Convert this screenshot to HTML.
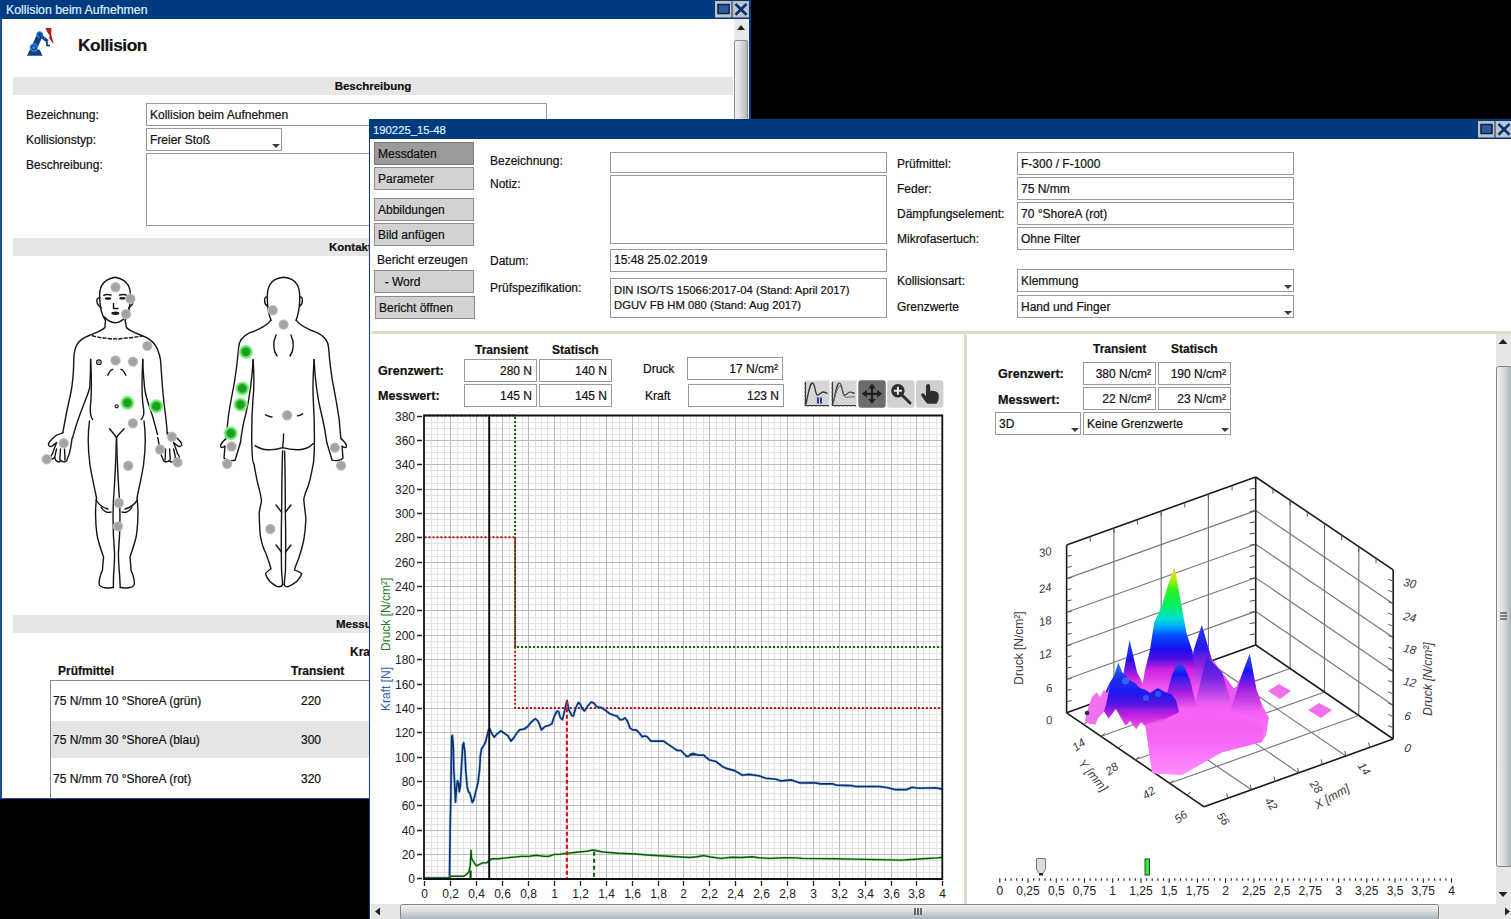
<!DOCTYPE html>
<html><head><meta charset="utf-8">
<style>
*{box-sizing:border-box}
html,body{margin:0;padding:0}
body{width:1511px;height:919px;background:#000;position:relative;overflow:hidden;font-family:"Liberation Sans",sans-serif;font-size:12px;color:#111;-webkit-text-stroke:0.2px currentColor}
.a{position:absolute}
.tb{position:absolute;background:#003a80;color:#dff2ff;font-size:12px;line-height:19px;white-space:nowrap}
.win{position:absolute;background:#fff;overflow:hidden}
.sec{position:absolute;background:#e6e6e6;height:18px;font-weight:bold;font-size:11.5px;line-height:18px;text-align:center}
.lbl{position:absolute;white-space:nowrap;line-height:14px}
.box{position:absolute;border:1px solid #9a9a9a;background:#fff;white-space:nowrap;line-height:14px;padding:4px 0 0 3px}
.r{text-align:right;padding:4px 4px 0 0}
.btn{position:absolute;background:#d2d2d2;border:1px solid #8c8c8c;white-space:nowrap;padding:4px 0 0 3px;line-height:14px}
.dd:after{content:"";position:absolute;right:1px;bottom:2px;border-left:4px solid transparent;border-right:4px solid transparent;border-top:4px solid #3a3a3a}
.b{font-weight:bold}
svg{position:absolute;left:0;top:0}
</style></head><body>

<!-- WINDOW 1 -->
<div class="win" style="left:0;top:0;width:751px;height:799px">
<div class="a" style="left:13px;top:77px;width:720px;height:18px;background:#e6e6e6"></div>
<div class="sec" style="left:13px;top:77px;width:720px;background:none">Beschreibung</div>
<div class="lbl" style="left:26px;top:108px">Bezeichnung:</div>
<div class="lbl" style="left:26px;top:133px">Kollisionstyp:</div>
<div class="lbl" style="left:26px;top:158px">Beschreibung:</div>
<div class="box" style="left:146px;top:103px;width:401px;height:22.5px">Kollision beim Aufnehmen</div>
<div class="box dd" style="left:146px;top:128px;width:136px;height:22.5px">Freier Stoß</div>
<div class="box" style="left:146px;top:153px;width:600px;height:72.5px"></div>
<div class="a" style="left:13px;top:238px;width:720px;height:18px;background:#e6e6e6"></div><div class="lbl b" style="left:329px;top:240px;font-size:11.5px">Kontaktbereiche</div>
<div class="a" style="left:13px;top:615px;width:720px;height:18px;background:#e6e6e6"></div><div class="lbl b" style="left:336px;top:617px;font-size:11.5px">Messungen</div>
<div class="lbl b" style="left:350px;top:645px">Kraft [N]</div>
<div class="lbl b" style="left:58px;top:664px">Prüfmittel</div>
<div class="lbl b" style="left:291px;top:664px">Transient</div>
<div class="a" style="left:50px;top:680px;width:700px;height:130px;border:1px solid #8a8a8a;border-right:none;border-bottom:none"></div>
<div class="a" style="left:51px;top:721px;width:700px;height:37px;background:#e5e5e5"></div>
<div class="lbl" style="left:53px;top:694px">75 N/mm 10 °ShoreA (grün)</div>
<div class="lbl" style="left:53px;top:733px">75 N/mm 30 °ShoreA (blau)</div>
<div class="lbl" style="left:53px;top:772px">75 N/mm 70 °ShoreA (rot)</div>
<div class="lbl" style="left:301px;top:694px">220</div>
<div class="lbl" style="left:301px;top:733px">300</div>
<div class="lbl" style="left:301px;top:772px">320</div>
<svg width="760" height="800" style="left:0;top:0">
<g stroke="#151515" stroke-width="1.4" fill="none" stroke-linecap="round" stroke-linejoin="round"><path d="M105.5 320.3 C101 314 100 306 99.8 300 C99 290 100 280 115.1 277.2 C130 280 131 290 130.3 300 C130 306 129 314 125.2 320.3"/><path d="M99.8 298 C96 297 96 303 99 306 L101.5 308"/><path d="M130.3 298 C134 297 134 303 131 306 L128.5 308"/><path d="M104.5 317 C108 321 111 322.7 115.1 322.7 C119 322.7 122 321 125.8 317"/><path d="M105.5 320.3 L104.9 327.5 C102 331 95 333 88 336 C78 340 74 346 73.8 359.8 C73.5 372 73.5 379 71 392 C68 405 65.3 418 62.8 432.8"/><path d="M125.2 320.3 L126.4 327.5 C129 331 136 333 143 336 C153 340 158 346 160.5 359.8 C161.5 372 162 385 164 403.4 C166 418 167 428 167.3 434.5"/><path d="M62.8 432.8 C59 434 57 435 55.7 435.7 C53 438 51 440 49.8 441.5 C48.5 443 48 445 48.8 445.5 C49.5 446.8 51 446.6 51.7 446.4 C53.5 445 55.5 443.5 56.6 442.5 C55 447 53.5 450 52.7 453.3 C51.5 455 50.5 456.5 50.8 457.2 C51.5 459.5 53 459.6 54.7 457.2 C55 459 56 461.5 58.6 462.1 C60 462 60.5 461 60.6 460.1 C61.5 461.5 63.5 462 65.5 461.5 C67 461 67.3 459.5 67.4 458.2 C68.5 456 69 455 69.4 453.3 C70.5 449 71 446 71.3 443.5 C71.8 440 72.1 437.5 72.6 437.7"/><path d="M56.5 449 L54.7 457.2 M60.5 449 L59.8 459.5 M64.5 449 L65 460"/><path d="M72.6 437.7 C75 428 78 419 84.1 403.4 C87 396 89.5 390 89.8 387.1 C90.5 375 90.6 368 90.6 359.4"/><path d="M 167.3 432.8 C 171.1 434.0 173.1 435.0 174.4 435.7 C 177.1 438.0 179.1 440.0 180.3 441.5 C 181.6 443.0 182.1 445.0 181.3 445.5 C 180.6 446.8 179.1 446.6 178.4 446.4 C 176.6 445.0 174.6 443.5 173.5 442.5 C 175.1 447.0 176.6 450.0 177.4 453.3 C 178.6 455.0 179.6 456.5 179.3 457.2 C 178.6 459.5 177.1 459.6 175.4 457.2 C 175.1 459.0 174.1 461.5 171.5 462.1 C 170.1 462.0 169.6 461.0 169.5 460.1 C 168.6 461.5 166.6 462.0 164.6 461.5 C 163.1 461.0 162.8 459.5 162.7 458.2 C 161.6 456.0 161.1 455.0 160.7 453.3 C 159.6 449.0 159.1 446.0 158.8 443.5 C 158.3 440.0 158.0 437.5 157.5 437.7"/><path d="M 173.6 449.0 L 175.4 457.2 M 169.6 449.0 L 170.3 459.5 M 165.6 449.0 L 165.1 460.0"/><path d="M157.5 434.5 C155 425 153 417 151 411.6 C147 400 145 393 144.5 387.1 C143.5 375 142.8 368 142.8 359.4"/><path d="M90.6 359.4 C91.4 375 91.6 395 90.5 405 C89.8 411.6 90 416 92.6 419.5"/><path d="M142.8 359.4 C142 375 141.8 395 143 405 C144.5 413.2 144 416 141.2 419.5"/><path d="M89.5 421 C87.5 435 88 450 90 465 C92 478 95 490 96.5 498 C95 510 95 520 97 535 C99 545 102 552 103.6 557.1 C103 563 102.5 568 102.5 570 C100 576 98.5 582 99.5 585 C101 588 108 588.5 113.4 587.5"/><path d="M144 421 C146 435 145.5 450 143.5 465 C141.5 478 138.5 490 137 498 C138.5 510 138.5 520 136.5 535 C134.5 545 131.5 552 130 557.1 C130.5 563 131 568 131 570 C133.5 576 135 582 134 585 C132.5 588 125.5 588.5 120.2 587.5"/><path d="M109.5 428.8 C112 432 115 435 116.4 437.6 C118 435 121 432 124.2 428.8"/><path d="M116.4 437.6 C116 455 115 480 113.5 500 C112.5 520 113.5 540 114.5 552 C115 562 113 575 113.4 587.5"/><path d="M116.6 437.6 C117 455 118 480 119.5 500 C120.5 520 119.5 540 118.5 552 C118 562 120 575 120.2 587.5"/><path d="M96 500 C99 505 104 508 108 509"/><path d="M137.5 500 C134 505 129 508 125 509"/><path d="M101 507 C104 512 108 513 111 512"/><path d="M132 507 C129 512 125 513 122 512"/><path d="M107.9 375.3 C109 372 110.5 370 112.7 369.3"/><path d="M121 369.3 C123 370 124.5 372 125.8 375.3"/><path d="M103.8 295.3 C105.5 294.3 108 294.3 111 295"/><path d="M119.5 295 C122.5 294.3 125 294.3 126.5 295.3"/><path d="M113.5 303.5 V308.5 H118"/></g>
<path d="M92.3 335.8 C97 337 101 338 104 338 C108 338 112 340 115.1 338.5 C118 340 122 338 126 338 C130 338 136 337 142.6 335.8" stroke="#151515" stroke-width="1.4" fill="none" stroke-linecap="round" stroke-linejoin="round" stroke-dasharray="3.2 2.2"/>
<circle cx="98.9" cy="362.2" r="2.3" fill="none" stroke="#151515" stroke-width="1.2"/><circle cx="98.9" cy="362.2" r="0.8" fill="#151515"/>
<ellipse cx="108" cy="298.5" rx="3.2" ry="1.3" fill="#151515"/><ellipse cx="122.5" cy="298.3" rx="3.2" ry="1.3" fill="#151515"/><ellipse cx="115.3" cy="313.2" rx="4" ry="1.7" fill="#151515"/>
<circle cx="116.7" cy="406.3" r="1.6" fill="none" stroke="#151515" stroke-width="1.1"/>
<g stroke="#151515" stroke-width="1.4" fill="none" stroke-linecap="round" stroke-linejoin="round"><path d="M271 320.2 C268.5 314 267.5 306 267.4 300 C266.5 288 270 278 283.6 277.2 C297 278 300.5 288 299.7 300 C299.5 306 298.5 314 296.1 320.2"/><path d="M267.4 297 C264 296 263.5 303 267 306"/><path d="M299.7 297 C303 296 303.5 303 300 306"/><path d="M271 320.2 C266 327 258 330 249.5 332.8 C243 336 239 341 238.7 347 C237 365 235 380 233.3 388.4 C231 400 229 410 227.9 420.7 C227 430 226.5 435 226.1 438.6"/><path d="M296.1 320.2 C301 327 309 330 317.6 332.8 C324 336 328 341 328.5 347 C330 365 332 380 333.9 388.4 C336 400 338 410 339.3 420.7 C340 430 340.5 435 341 438.6"/><path d="M226.1 438.6 C223 441 220 444 220.8 447 C222 448 224 447 225 446 L224 458 C226 461 232 461 235.1 460.2 L240.5 442.2"/><path d="M341 438.6 C344 441 347 444 346.4 447 C345 448 343 447 342 446 L343 458 C341 461 335 461 332.1 460.2 L326.7 442.2"/><path d="M240.5 442.2 C242 430 244 420 245.9 413.5 C249 400 252 380 253.1 359.7"/><path d="M326.7 442.2 C325 430 323 420 321.3 413.5 C318 400 315 380 314.1 359.7"/><path d="M253.1 359.7 C254.5 380 253.5 395 252.9 400 C251.8 415 251.6 430 251.8 442.4 C252 455 253 463 253.9 463.6 C256 476 258 485 259.2 489.1 C261 496 261.5 500 261.4 501.8 C260 508 259 512 259.2 514.5 C259.5 525 259.8 530 260.3 535.7 C262 545 264 550 265.6 552.7 C268 559 270 565 271 569 C268 571 265.5 572.5 265.6 574 C267 579 270 583 277.3 586.6 C280 587 282 586 282.6 584.5"/><path d="M314.1 359.7 C312.7 380 313 395 313.3 400 C314.2 415 314.5 430 314.4 442.4 C314.3 455 314 460 313.3 463.6 C311 476 309 485 307 489.1 C305 494 304 497 303.8 499.7 C304.5 508 305.5 514 305.9 518.8 C305.5 528 304.8 534 303.8 540 C302 548 300.5 553 298.5 559.1 C296.5 564 295 567 294.5 570 C297 571 301 572.5 301.7 574 C300 579 297 583 287.9 586.6 C286 587 284.5 586 284.2 584.5"/><path d="M283.6 433.9 C283.5 440 283 445 282.6 447.7"/><path d="M282.6 450.9 C281.5 480 282 500 281.5 520 C281 545 281.5 560 281.5 569.7 L282.6 584.5"/><path d="M284.6 450.9 C285.5 480 285 500 285.5 520 C286 545 285.5 560 285.5 569.7 L284.2 584.5"/><path d="M276 505 L281.5 512 M291 505 L285.5 512"/><path d="M276 545 L281.5 552 M291 545 L285.5 552"/><path d="M255 445.6 C260 448.5 264 450 267.7 449.8 C274 450 279 449 282.6 447.7 C287 449 292 450 298.5 449.8 C305 449.5 310 447 313.3 443.5"/><path d="M265.6 414.8 C268 416 270 417 272 417"/><path d="M297.4 415.9 C299 415.5 301 414.8 302.7 413.8"/><path d="M276 335 C273 342 273 350 277 356"/><path d="M291 335 C294 342 294 350 290 356"/></g>
<defs><radialGradient id="gd"><stop offset="0" stop-color="#a0a0a0"/><stop offset="0.7" stop-color="#a6a6a6"/><stop offset="1" stop-color="#c8c8c8"/></radialGradient><radialGradient id="gg"><stop offset="0" stop-color="#1e9a1e"/><stop offset="0.5" stop-color="#20a020"/><stop offset="0.62" stop-color="#50d850"/><stop offset="0.85" stop-color="#90f090"/><stop offset="1" stop-color="#d0fcd0" stop-opacity="0.4"/></radialGradient></defs>
<circle cx="115.5" cy="287.3" r="5.2" fill="url(#gd)"/><circle cx="130.4" cy="298.8" r="5.2" fill="url(#gd)"/><circle cx="126.1" cy="314.1" r="5.2" fill="url(#gd)"/><circle cx="147.3" cy="345.9" r="5.2" fill="url(#gd)"/><circle cx="115.5" cy="360.4" r="5.2" fill="url(#gd)"/><circle cx="132.9" cy="361.6" r="5.2" fill="url(#gd)"/><circle cx="132.9" cy="423.2" r="5.2" fill="url(#gd)"/><circle cx="172" cy="436.8" r="5.2" fill="url(#gd)"/><circle cx="63.7" cy="443.2" r="5.2" fill="url(#gd)"/><circle cx="160.1" cy="449.5" r="5.2" fill="url(#gd)"/><circle cx="46.7" cy="459.3" r="5.2" fill="url(#gd)"/><circle cx="177.5" cy="462.3" r="5.2" fill="url(#gd)"/><circle cx="128.2" cy="465.7" r="5.2" fill="url(#gd)"/><circle cx="118.9" cy="503" r="5.2" fill="url(#gd)"/><circle cx="118" cy="526.4" r="5.2" fill="url(#gd)"/><circle cx="272.8" cy="310.2" r="5.2" fill="url(#gd)"/><circle cx="283.6" cy="324.5" r="5.2" fill="url(#gd)"/><circle cx="287.1" cy="415.3" r="5.2" fill="url(#gd)"/><circle cx="231.5" cy="446.5" r="5.2" fill="url(#gd)"/><circle cx="334.9" cy="447.6" r="5.2" fill="url(#gd)"/><circle cx="227.2" cy="463.8" r="5.2" fill="url(#gd)"/><circle cx="341" cy="465.6" r="5.2" fill="url(#gd)"/><circle cx="270.3" cy="529" r="5.2" fill="url(#gd)"/>
<circle cx="127.4" cy="402.8" r="7.5" fill="url(#gg)"/><circle cx="156.3" cy="406.2" r="7.5" fill="url(#gg)"/><circle cx="245.9" cy="351.8" r="7.5" fill="url(#gg)"/><circle cx="242.3" cy="388.4" r="7.5" fill="url(#gg)"/><circle cx="240.5" cy="404.6" r="7.5" fill="url(#gg)"/><circle cx="230.8" cy="433.3" r="7.5" fill="url(#gg)"/>
</svg>
<svg width="80" height="70" style="left:0;top:0">
<path d="M27 55.8 L30 49.5 L39.5 49.5 L42.6 55.8 Z" fill="#123f86"/>
<path d="M31 48 L37 34 L42.5 36.5 L36.5 50 Z" fill="#123f86"/>
<circle cx="33.8" cy="47.6" r="3.6" fill="#154a9a" stroke="#3c90f0" stroke-width="1.1"/>
<circle cx="33.8" cy="47.6" r="1.3" fill="#3c90f0"/>
<circle cx="39.7" cy="34.5" r="2.8" fill="#154a9a" stroke="#3c90f0" stroke-width="1.1"/>
<path d="M40 33 L48.5 40 L46.5 42.5 L38.5 36 Z" fill="#123f86"/>
<path d="M41.5 36 l1.3 1.1 M44 38.1 l1.3 1.1" stroke="#4aa0ff" stroke-width="0.9"/>
<path d="M47 41.5 V45.5 H50" stroke="#0a2a60" stroke-width="1.6" fill="none"/>
<path d="M45.3 27.8 L51.5 28.3 L51.2 34.5 L53.8 44.5 L49.3 38.5 L49.6 35.5 L47.2 32 Z" fill="#b81a1a"/>
</svg>
<div class="a b" style="left:78px;top:35px;font-size:17.3px;line-height:20px;letter-spacing:-0.45px">Kollision</div>
<!-- scrollbar -->
<div class="a" style="left:734px;top:19px;width:15px;height:778px;background:#e8e8e8"></div>
<div class="a" style="left:737px;top:25px;width:0;height:0;border-left:4px solid transparent;border-right:4px solid transparent;border-bottom:5px solid #222"></div>
<div class="a" style="left:734px;top:40px;width:14px;height:760px;border:1px solid #8f8f8f;border-radius:2px;background:linear-gradient(90deg,#f0f0f0,#e0e0e0 40%,#b8b8b8)"></div>
<div class="a" style="left:0;top:0;width:1.5px;height:799px;background:#1a4f96"></div>
<div class="a" style="left:749px;top:0;width:2px;height:799px;background:#003a80"></div>
<div class="a" style="left:0;top:797.5px;width:751px;height:1.5px;background:#1a4f96"></div>
<div class="tb" style="left:0;top:0;width:751px;height:19px;padding-left:6px;padding-top:1px;font-size:12.3px;line-height:19px">Kollision beim Aufnehmen</div>
<svg width="40" height="20" style="left:715px;top:1px">
<rect x="0.5" y="0.5" width="15.5" height="15.5" fill="#b9c6d2" stroke="#c9b8a8" stroke-width="1"/>
<rect x="3" y="3.5" width="11" height="9" fill="#2e5aa0" stroke="#0b2554" stroke-width="1.6"/>
<rect x="18" y="0.5" width="15.5" height="15.5" fill="#b9c6d2" stroke="#c9b8a8" stroke-width="1"/>
<path d="M20.5 3 L31.5 13.8 M31.5 3 L20.5 13.8" stroke="#0b3272" stroke-width="2.6"/>
</svg>
</div>

<!-- WINDOW 2 -->
<div class="win" style="left:369px;top:119px;width:1142px;height:800px;border-left:1.5px solid #0d3c84"></div>
<div class="tb" style="left:369px;top:119px;width:1142px;height:20px;padding-left:4px;padding-top:1px;line-height:20px;font-size:11.3px">190225_15-48</div>
<svg width="40" height="20" style="left:1478px;top:121px">
<rect x="0.5" y="0.5" width="15.5" height="15.5" fill="#b9c6d2" stroke="#c9b8a8" stroke-width="1"/>
<rect x="3" y="3.5" width="11" height="9" fill="#2e5aa0" stroke="#0b2554" stroke-width="1.6"/>
<rect x="18" y="0.5" width="15.5" height="15.5" fill="#b9c6d2" stroke="#c9b8a8" stroke-width="1"/>
<path d="M20.5 3 L31.5 13.8 M31.5 3 L20.5 13.8" stroke="#0b3272" stroke-width="2.6"/>
</svg>

<div class="btn" style="left:374px;top:142px;width:100px;height:23px;background:#9b9b9b;border-color:#7a7a7a">Messdaten</div>
<div class="btn" style="left:374px;top:167px;width:100px;height:23px">Parameter</div>
<div class="btn" style="left:374px;top:198px;width:100px;height:23px">Abbildungen</div>
<div class="btn" style="left:374px;top:223px;width:100px;height:23px">Bild anfügen</div>
<div class="lbl" style="left:377px;top:253px">Bericht erzeugen</div>
<div class="btn" style="left:374px;top:270px;width:100px;height:23px">&nbsp; - Word</div>
<div class="btn" style="left:375px;top:296px;width:100px;height:23px">Bericht öffnen</div>

<div class="lbl" style="left:490px;top:154px">Bezeichnung:</div>
<div class="lbl" style="left:490px;top:177px">Notiz:</div>
<div class="lbl" style="left:490px;top:254px">Datum:</div>
<div class="lbl" style="left:490px;top:281px">Prüfspezifikation:</div>
<div class="box" style="left:610px;top:152px;width:277px;height:21px"></div>
<div class="box" style="left:610px;top:175px;width:277px;height:69px"></div>
<div class="box" style="left:610px;top:249px;width:277px;height:23px;padding-top:3px">15:48 25.02.2019</div>
<div class="box" style="left:610px;top:278px;width:277px;height:40px;line-height:15px;padding-top:4px;font-size:11.3px">DIN ISO/TS 15066:2017-04 (Stand: April 2017)<br>DGUV FB HM 080 (Stand: Aug 2017)</div>

<div class="lbl" style="left:897px;top:157px">Prüfmittel:</div>
<div class="lbl" style="left:897px;top:182px">Feder:</div>
<div class="lbl" style="left:897px;top:207px">Dämpfungselement:</div>
<div class="lbl" style="left:897px;top:232px">Mikrofasertuch:</div>
<div class="lbl" style="left:897px;top:274px">Kollisionsart:</div>
<div class="lbl" style="left:897px;top:300px">Grenzwerte</div>
<div class="box" style="left:1017px;top:152px;width:277px;height:22.5px">F-300 / F-1000</div>
<div class="box" style="left:1017px;top:177px;width:277px;height:22.5px">75 N/mm</div>
<div class="box" style="left:1017px;top:202px;width:277px;height:22.5px">70 °ShoreA (rot)</div>
<div class="box" style="left:1017px;top:227px;width:277px;height:22.5px">Ohne Filter</div>
<div class="box dd" style="left:1017px;top:269px;width:277px;height:22.5px">Klemmung</div>
<div class="box dd" style="left:1017px;top:295px;width:277px;height:22.5px">Hand und Finger</div>

<div class="a" style="left:371px;top:331px;width:1140px;height:3px;background:#dcdccb"></div>
<div class="a" style="left:964px;top:334px;width:3px;height:585px;background:#dcdccb"></div>

<svg width="1511" height="919" style="left:0;top:0">
<path d="M431.5 415.5V878.5M437.5 415.5V878.5M444.5 415.5V878.5M457.5 415.5V878.5M463.5 415.5V878.5M470.5 415.5V878.5M483.5 415.5V878.5M489.5 415.5V878.5M496.5 415.5V878.5M509.5 415.5V878.5M515.5 415.5V878.5M522.5 415.5V878.5M535.5 415.5V878.5M541.5 415.5V878.5M547.5 415.5V878.5M560.5 415.5V878.5M567.5 415.5V878.5M573.5 415.5V878.5M586.5 415.5V878.5M593.5 415.5V878.5M599.5 415.5V878.5M612.5 415.5V878.5M619.5 415.5V878.5M625.5 415.5V878.5M638.5 415.5V878.5M645.5 415.5V878.5M651.5 415.5V878.5M664.5 415.5V878.5M670.5 415.5V878.5M677.5 415.5V878.5M690.5 415.5V878.5M696.5 415.5V878.5M703.5 415.5V878.5M716.5 415.5V878.5M722.5 415.5V878.5M729.5 415.5V878.5M742.5 415.5V878.5M748.5 415.5V878.5M755.5 415.5V878.5M768.5 415.5V878.5M774.5 415.5V878.5M780.5 415.5V878.5M793.5 415.5V878.5M800.5 415.5V878.5M806.5 415.5V878.5M819.5 415.5V878.5M826.5 415.5V878.5M832.5 415.5V878.5M845.5 415.5V878.5M852.5 415.5V878.5M858.5 415.5V878.5M871.5 415.5V878.5M878.5 415.5V878.5M884.5 415.5V878.5M897.5 415.5V878.5M903.5 415.5V878.5M910.5 415.5V878.5M923.5 415.5V878.5M929.5 415.5V878.5M936.5 415.5V878.5M424.5 872.5H942.3M424.5 866.5H942.3M424.5 860.5H942.3M424.5 848.5H942.3M424.5 842.5H942.3M424.5 836.5H942.3M424.5 824.5H942.3M424.5 818.5H942.3M424.5 811.5H942.3M424.5 799.5H942.3M424.5 793.5H942.3M424.5 787.5H942.3M424.5 775.5H942.3M424.5 769.5H942.3M424.5 763.5H942.3M424.5 751.5H942.3M424.5 744.5H942.3M424.5 738.5H942.3M424.5 726.5H942.3M424.5 720.5H942.3M424.5 714.5H942.3M424.5 702.5H942.3M424.5 696.5H942.3M424.5 690.5H942.3M424.5 677.5H942.3M424.5 671.5H942.3M424.5 665.5H942.3M424.5 653.5H942.3M424.5 647.5H942.3M424.5 641.5H942.3M424.5 629.5H942.3M424.5 623.5H942.3M424.5 617.5H942.3M424.5 604.5H942.3M424.5 598.5H942.3M424.5 592.5H942.3M424.5 580.5H942.3M424.5 574.5H942.3M424.5 568.5H942.3M424.5 556.5H942.3M424.5 550.5H942.3M424.5 543.5H942.3M424.5 531.5H942.3M424.5 525.5H942.3M424.5 519.5H942.3M424.5 507.5H942.3M424.5 501.5H942.3M424.5 495.5H942.3M424.5 483.5H942.3M424.5 476.5H942.3M424.5 470.5H942.3M424.5 458.5H942.3M424.5 452.5H942.3M424.5 446.5H942.3M424.5 434.5H942.3M424.5 428.5H942.3M424.5 422.5H942.3" stroke="#e2e2e2" stroke-width="1" fill="none"/>
<path d="M450.5 415.5V878.5M476.5 415.5V878.5M502.5 415.5V878.5M528.5 415.5V878.5M554.5 415.5V878.5M580.5 415.5V878.5M606.5 415.5V878.5M632.5 415.5V878.5M658.5 415.5V878.5M683.5 415.5V878.5M709.5 415.5V878.5M735.5 415.5V878.5M761.5 415.5V878.5M787.5 415.5V878.5M813.5 415.5V878.5M839.5 415.5V878.5M865.5 415.5V878.5M891.5 415.5V878.5M916.5 415.5V878.5M424.5 854.5H942.3M424.5 830.5H942.3M424.5 805.5H942.3M424.5 781.5H942.3M424.5 757.5H942.3M424.5 732.5H942.3M424.5 708.5H942.3M424.5 684.5H942.3M424.5 659.5H942.3M424.5 635.5H942.3M424.5 610.5H942.3M424.5 586.5H942.3M424.5 562.5H942.3M424.5 537.5H942.3M424.5 513.5H942.3M424.5 489.5H942.3M424.5 464.5H942.3M424.5 440.5H942.3" stroke="#bcbcbc" stroke-width="1" fill="none"/>
<path d="M417 878.5H422M417 854.5H422M417 830.5H422M417 805.5H422M417 781.5H422M417 757.5H422M417 732.5H422M417 708.5H422M417 684.5H422M417 659.5H422M417 635.5H422M417 610.5H422M417 586.5H422M417 562.5H422M417 537.5H422M417 513.5H422M417 489.5H422M417 464.5H422M417 440.5H422M417 416.5H422M424.5 881V886M450.5 881V886M476.5 881V886M502.5 881V886M528.5 881V886M554.5 881V886M580.5 881V886M606.5 881V886M632.5 881V886M658.5 881V886M683.5 881V886M709.5 881V886M735.5 881V886M761.5 881V886M787.5 881V886M813.5 881V886M839.5 881V886M865.5 881V886M891.5 881V886M916.5 881V886M942.5 881V886" stroke="#222" stroke-width="1.3" fill="none"/>
<g font-family="Liberation Sans" font-size="12" fill="#222"><text x="415" y="883.0" text-anchor="end">0</text><text x="415" y="859.0" text-anchor="end">20</text><text x="415" y="835.0" text-anchor="end">40</text><text x="415" y="810.0" text-anchor="end">60</text><text x="415" y="786.0" text-anchor="end">80</text><text x="415" y="762.0" text-anchor="end">100</text><text x="415" y="737.0" text-anchor="end">120</text><text x="415" y="713.0" text-anchor="end">140</text><text x="415" y="689.0" text-anchor="end">160</text><text x="415" y="664.0" text-anchor="end">180</text><text x="415" y="640.0" text-anchor="end">200</text><text x="415" y="615.0" text-anchor="end">220</text><text x="415" y="591.0" text-anchor="end">240</text><text x="415" y="567.0" text-anchor="end">260</text><text x="415" y="542.0" text-anchor="end">280</text><text x="415" y="518.0" text-anchor="end">300</text><text x="415" y="494.0" text-anchor="end">320</text><text x="415" y="469.0" text-anchor="end">340</text><text x="415" y="445.0" text-anchor="end">360</text><text x="415" y="421.0" text-anchor="end">380</text><text x="424.5" y="898" text-anchor="middle">0</text><text x="450.5" y="898" text-anchor="middle">0,2</text><text x="476.5" y="898" text-anchor="middle">0,4</text><text x="502.5" y="898" text-anchor="middle">0,6</text><text x="528.5" y="898" text-anchor="middle">0,8</text><text x="554.5" y="898" text-anchor="middle">1</text><text x="580.5" y="898" text-anchor="middle">1,2</text><text x="606.5" y="898" text-anchor="middle">1,4</text><text x="632.5" y="898" text-anchor="middle">1,6</text><text x="658.5" y="898" text-anchor="middle">1,8</text><text x="683.5" y="898" text-anchor="middle">2</text><text x="709.5" y="898" text-anchor="middle">2,2</text><text x="735.5" y="898" text-anchor="middle">2,4</text><text x="761.5" y="898" text-anchor="middle">2,6</text><text x="787.5" y="898" text-anchor="middle">2,8</text><text x="813.5" y="898" text-anchor="middle">3</text><text x="839.5" y="898" text-anchor="middle">3,2</text><text x="865.5" y="898" text-anchor="middle">3,4</text><text x="891.5" y="898" text-anchor="middle">3,6</text><text x="916.5" y="898" text-anchor="middle">3,8</text><text x="942.5" y="898" text-anchor="middle">4</text></g>
<polyline points="424.5,415.5 515.1,415.5 515.1,647.0 942.3,647.0" fill="none" stroke="#0a6a0a" stroke-width="2" stroke-dasharray="2 2"/>
<polyline points="424.5,537.3 515.1,537.3 515.1,707.9 942.3,707.9" fill="none" stroke="#c01010" stroke-width="2" stroke-dasharray="2 2"/>
<polyline points="424.5,878.0 449.5,878.0 450.3,820.1 450.7,803.9 451.7,736.8 452.4,735.4 453.4,748.8 453.8,769.5 454.6,783.2 455.5,802.2 456.3,790.1 457.5,780.7 458.6,783.2 459.3,791.8 460.3,786.7 461.5,766.0 462.7,745.4 463.7,742.8 464.9,752.3 465.8,771.2 467.2,786.7 468.4,791.8 469.6,792.7 471.0,797.0 472.3,802.5 473.6,800.4 475.3,793.6 477.0,786.7 478.2,781.5 479.6,769.5 480.4,755.7 481.6,748.8 483.9,745.4 485.6,741.9 486.8,736.8 488.5,729.9 489.9,729.0 491.6,733.3 494.2,737.1 496.8,734.2 501.1,730.8 504.5,733.3 508.0,735.9 510.9,741.1 514.0,737.6 516.6,733.3 519.5,729.9 524.3,729.0 527.7,726.5 531.2,722.2 535.5,718.7 538.1,721.3 541.5,729.9 545.0,726.5 548.4,725.6 551.8,723.9 554.4,716.1 557.0,711.0 558.7,711.8 560.4,717.9 562.5,719.6 564.7,710.1 567.0,700.6 569.0,710.1 571.6,715.3 573.3,716.1 575.9,707.5 578.5,702.4 580.2,704.1 581.9,708.4 584.5,711.0 588.0,705.8 591.4,702.0 594.0,703.2 596.6,706.7 600.9,707.5 605.2,710.1 609.5,713.6 613.8,715.3 617.2,716.1 619.8,719.6 622.4,719.6 625.0,717.9 627.5,721.3 630.1,728.2 632.7,729.9 636.1,729.9 639.6,733.3 642.2,736.8 644.7,735.9 647.3,736.8 650.8,741.1 656.8,741.1 663.7,741.1 667.1,743.7 672.3,747.1 677.4,750.5 680.9,750.5 684.3,754.0 686.9,756.6 689.5,755.7 692.9,754.0 696.4,754.8 690.0,754.6 693.4,753.4 697.7,755.1 703.8,755.1 708.9,759.8 715.8,761.5 722.7,766.7 727.9,768.9 734.7,770.6 742.5,775.3 748.5,774.4 758.8,775.8 765.7,778.2 776.0,779.2 781.2,780.9 791.5,779.9 800.1,783.0 813.9,782.7 820.8,783.9 832.8,783.9 836.2,785.1 851.7,785.6 855.2,786.5 879.3,786.5 887.9,787.8 894.7,789.6 906.8,789.6 912.0,787.3 918.8,788.2 936.0,787.8 942.9,789.4" fill="none" stroke="#6aa8ec" stroke-width="2.8" stroke-linejoin="round" opacity="0.55"/>
<polyline points="424.5,878.0 449.5,878.0 450.3,820.1 450.7,803.9 451.7,736.8 452.4,735.4 453.4,748.8 453.8,769.5 454.6,783.2 455.5,802.2 456.3,790.1 457.5,780.7 458.6,783.2 459.3,791.8 460.3,786.7 461.5,766.0 462.7,745.4 463.7,742.8 464.9,752.3 465.8,771.2 467.2,786.7 468.4,791.8 469.6,792.7 471.0,797.0 472.3,802.5 473.6,800.4 475.3,793.6 477.0,786.7 478.2,781.5 479.6,769.5 480.4,755.7 481.6,748.8 483.9,745.4 485.6,741.9 486.8,736.8 488.5,729.9 489.9,729.0 491.6,733.3 494.2,737.1 496.8,734.2 501.1,730.8 504.5,733.3 508.0,735.9 510.9,741.1 514.0,737.6 516.6,733.3 519.5,729.9 524.3,729.0 527.7,726.5 531.2,722.2 535.5,718.7 538.1,721.3 541.5,729.9 545.0,726.5 548.4,725.6 551.8,723.9 554.4,716.1 557.0,711.0 558.7,711.8 560.4,717.9 562.5,719.6 564.7,710.1 567.0,700.6 569.0,710.1 571.6,715.3 573.3,716.1 575.9,707.5 578.5,702.4 580.2,704.1 581.9,708.4 584.5,711.0 588.0,705.8 591.4,702.0 594.0,703.2 596.6,706.7 600.9,707.5 605.2,710.1 609.5,713.6 613.8,715.3 617.2,716.1 619.8,719.6 622.4,719.6 625.0,717.9 627.5,721.3 630.1,728.2 632.7,729.9 636.1,729.9 639.6,733.3 642.2,736.8 644.7,735.9 647.3,736.8 650.8,741.1 656.8,741.1 663.7,741.1 667.1,743.7 672.3,747.1 677.4,750.5 680.9,750.5 684.3,754.0 686.9,756.6 689.5,755.7 692.9,754.0 696.4,754.8 690.0,754.6 693.4,753.4 697.7,755.1 703.8,755.1 708.9,759.8 715.8,761.5 722.7,766.7 727.9,768.9 734.7,770.6 742.5,775.3 748.5,774.4 758.8,775.8 765.7,778.2 776.0,779.2 781.2,780.9 791.5,779.9 800.1,783.0 813.9,782.7 820.8,783.9 832.8,783.9 836.2,785.1 851.7,785.6 855.2,786.5 879.3,786.5 887.9,787.8 894.7,789.6 906.8,789.6 912.0,787.3 918.8,788.2 936.0,787.8 942.9,789.4" fill="none" stroke="#0c3070" stroke-width="1.6" stroke-linejoin="round"/>
<polyline points="424.2,878.3 449.9,878.3 450.5,876.2 463.8,876.2 466.8,874.1 469.1,871.5 470.3,864.7 471.0,850.3 471.6,858.7 474.4,863.2 476.6,865.9 478.9,864.7 482.7,862.9 486.5,862.9 489.5,860.2 492.5,858.7 498.6,858.7 506.1,857.9 513.7,857.1 521.3,856.4 528.8,856.4 536.4,855.3 544.0,856.4 548.5,856.4 554.5,854.4 560.0,854.1 578.8,852.0 586.9,851.2 592.9,850.0 602.9,852.0 619.0,853.2 635.1,854.0 651.1,855.2 690.0,857.5 696.9,856.7 703.8,855.6 710.6,857.0 721.0,858.4 731.3,857.3 741.6,857.5 751.9,856.7 758.8,857.7 769.1,858.4 784.6,857.7 796.7,857.9 801.8,858.4 836.2,858.7 851.7,859.1 879.3,859.6 901.6,860.1 922.3,858.7 937.8,857.9 942.9,857.3" fill="none" stroke="#60d860" stroke-width="2.6" stroke-linejoin="round" opacity="0.5"/>
<polyline points="424.2,878.3 449.9,878.3 450.5,876.2 463.8,876.2 466.8,874.1 469.1,871.5 470.3,864.7 471.0,850.3 471.6,858.7 474.4,863.2 476.6,865.9 478.9,864.7 482.7,862.9 486.5,862.9 489.5,860.2 492.5,858.7 498.6,858.7 506.1,857.9 513.7,857.1 521.3,856.4 528.8,856.4 536.4,855.3 544.0,856.4 548.5,856.4 554.5,854.4 560.0,854.1 578.8,852.0 586.9,851.2 592.9,850.0 602.9,852.0 619.0,853.2 635.1,854.0 651.1,855.2 690.0,857.5 696.9,856.7 703.8,855.6 710.6,857.0 721.0,858.4 731.3,857.3 741.6,857.5 751.9,856.7 758.8,857.7 769.1,858.4 784.6,857.7 796.7,857.9 801.8,858.4 836.2,858.7 851.7,859.1 879.3,859.6 901.6,860.1 922.3,858.7 937.8,857.9 942.9,857.3" fill="none" stroke="#0a560a" stroke-width="1.4" stroke-linejoin="round"/>
<line x1="489.2" y1="415.5" x2="489.2" y2="878.5" stroke="#111" stroke-width="2"/>
<line x1="566.9" y1="701.8" x2="566.9" y2="878.5" stroke="#e01010" stroke-width="2.2" stroke-dasharray="4 2.5"/>
<line x1="594.1" y1="851.7" x2="594.1" y2="878.5" stroke="#0c5a0c" stroke-width="2" stroke-dasharray="4 3"/>
<line x1="470.6" y1="870.5" x2="470.6" y2="878.5" stroke="#0a560a" stroke-width="2.2"/>
<path d="M424.0 415.5V879.0H942.3V415.5Z" fill="none" stroke="#111" stroke-width="1.8"/>
<g transform="translate(390,711) rotate(-90)" font-family="Liberation Sans" font-size="12"><text x="0" y="0" fill="#2a62b0">Kraft [N]</text></g>
<g transform="translate(390,651) rotate(-90)" font-family="Liberation Sans" font-size="12"><text x="0" y="0" fill="#1e7a1e">Druck [N/cm²]</text></g>
</svg>
<svg width="1511" height="919" style="left:0;top:0">
<rect x="804.5" y="380.5" width="25" height="26" fill="#d6d6d6"/>
<path d="M805.5 382V405.5H829" stroke="#333" stroke-width="1.2" fill="none"/>
<path d="M804 384h2M804 388h2M804 392h2M804 396h2M804 400h2M804 404h2M808 405v2M812 405v2M816 405v2M820 405v2M824 405v2M828 405v2" stroke="#555" stroke-width="0.8"/>
<path d="M806 404 C809 390 810 383 812.5 383 C815 383 815 393 817 395 C819 396 821 392 823 392 C825 392 826 393 827.5 393.5" stroke="#333" stroke-width="1.3" fill="none"/>
<rect x="816" y="396.5" width="7" height="8" fill="#c8c8f0"/><path d="M818 397.5v6M821 397.5v6" stroke="#0a2a6a" stroke-width="1.6"/>
<rect x="831.5" y="380.5" width="25" height="26" fill="#d6d6d6"/>
<path d="M832.5 382V405.5H856" stroke="#333" stroke-width="1.2" fill="none"/>
<path d="M831 384h2M831 388h2M831 392h2M831 396h2M831 400h2M831 404h2M835 405v2M839 405v2M843 405v2M847 405v2M851 405v2M855 405v2" stroke="#555" stroke-width="0.8"/>
<path d="M833 404 C836 390 837 383 839.5 383 C842 383 842 393 844 395 C846 396 848 392 850 392 C852 392 853 393 854.5 393.5" stroke="#333" stroke-width="1.2" fill="none"/>
<path d="M833 404 C836 392 838 386 840 386 C843 386 843 396 845 397 C848 398 850 396 855 397" stroke="#666" stroke-width="1" fill="none"/>
<rect x="858.3" y="380.3" width="27.4" height="27.4" rx="3" fill="#6c6c6c"/>
<path d="M872 386v16M864 393.8h16" stroke="#1e1e1e" stroke-width="2.2"/>
<path d="M872 383.5l-3.8 5h7.6zM872 404l-3.8 -5h7.6zM861.8 393.8l5 -3.8v7.6zM882.2 393.8l-5 -3.8v7.6z" fill="#1e1e1e"/>
<rect x="887.2" y="380.3" width="27.4" height="27.4" rx="3" fill="#d0d0d0"/>
<circle cx="897.9" cy="390.8" r="6.7" fill="#2e2e2e"/>
<path d="M897.9 386.8v8M893.9 390.8h8" stroke="#e8e8e8" stroke-width="2"/>
<path d="M902.5 395.5l7.5 7.5" stroke="#2e2e2e" stroke-width="3" stroke-linecap="round"/>
<rect x="916" y="380.3" width="27.4" height="27.4" rx="3" fill="#d0d0d0"/>
<path d="M926 386.5 C926 383.3 930.2 383.3 930.2 386.5 L930.2 391 C933.5 390.5 937.5 391.5 938.4 393.5 C939.3 397 938.8 401 936.5 403.8 L927.5 403.8 C925 401 923 398.5 921.3 395.5 C920.6 393.8 922.6 392.3 924 393.8 L926 396 Z" fill="#2e2e2e"/>
</svg>
<svg width="1511" height="919" style="left:0;top:0">
<defs><linearGradient id="sbh" x1="0" y1="0" x2="0" y2="1"><stop offset="0" stop-color="#f2f2f2"/><stop offset="0.45" stop-color="#dcdcdc"/><stop offset="1" stop-color="#a9b3bd"/></linearGradient>
<linearGradient id="sbv" x1="0" y1="0" x2="1" y2="0"><stop offset="0" stop-color="#f2f2f2"/><stop offset="0.45" stop-color="#dcdcdc"/><stop offset="1" stop-color="#a9b3bd"/></linearGradient>
<linearGradient id="sth" x1="0" y1="0" x2="1" y2="0"><stop offset="0" stop-color="#e8e8e8"/><stop offset="1" stop-color="#b8b8b8"/></linearGradient></defs>
<rect x="371" y="904" width="1140" height="15" fill="#e6e6e6"/>
<path d="M375 911.5l5 -4v8z" fill="#222"/>
<rect x="400.5" y="904.5" width="1038" height="15" rx="2" fill="url(#sbh)" stroke="#858585"/>
<path d="M915 908v7M918 908v7M921 908v7" stroke="#222" stroke-width="1.2"/>
<path d="M1510 911.5l-5 -4v8z" fill="#222"/>
<rect x="1496" y="334" width="15" height="570" fill="#e6e6e6"/>
<path d="M1503 339l-4.5 5h9z" fill="#222"/>
<rect x="1496.5" y="366.5" width="15" height="500" rx="2" fill="url(#sbv)" stroke="#858585"/>
<path d="M1500 613h7M1500 616h7M1500 619h7" stroke="#222" stroke-width="1.2"/>
<path d="M1503 897l-4.5 -5h9z" fill="#222"/>
<path d="M999.8 878.3V882.8M1005.4 878.3V880.8M1011.1 878.3V880.8M1016.7 878.3V880.8M1022.4 878.3V880.8M1028.0 878.3V882.8M1033.7 878.3V880.8M1039.3 878.3V880.8M1045.0 878.3V880.8M1050.6 878.3V880.8M1056.3 878.3V882.8M1061.9 878.3V880.8M1067.6 878.3V880.8M1073.2 878.3V880.8M1078.8 878.3V880.8M1084.5 878.3V882.8M1090.1 878.3V880.8M1095.8 878.3V880.8M1101.4 878.3V880.8M1107.1 878.3V880.8M1112.7 878.3V882.8M1118.4 878.3V880.8M1124.0 878.3V880.8M1129.7 878.3V880.8M1135.3 878.3V880.8M1141.0 878.3V882.8M1146.6 878.3V880.8M1152.2 878.3V880.8M1157.9 878.3V880.8M1163.5 878.3V880.8M1169.2 878.3V882.8M1174.8 878.3V880.8M1180.5 878.3V880.8M1186.1 878.3V880.8M1191.8 878.3V880.8M1197.4 878.3V882.8M1203.1 878.3V880.8M1208.7 878.3V880.8M1214.4 878.3V880.8M1220.0 878.3V880.8M1225.6 878.3V882.8M1231.3 878.3V880.8M1236.9 878.3V880.8M1242.6 878.3V880.8M1248.2 878.3V880.8M1253.9 878.3V882.8M1259.5 878.3V880.8M1265.2 878.3V880.8M1270.8 878.3V880.8M1276.5 878.3V880.8M1282.1 878.3V882.8M1287.8 878.3V880.8M1293.4 878.3V880.8M1299.1 878.3V880.8M1304.7 878.3V880.8M1310.3 878.3V882.8M1316.0 878.3V880.8M1321.6 878.3V880.8M1327.3 878.3V880.8M1332.9 878.3V880.8M1338.6 878.3V882.8M1344.2 878.3V880.8M1349.9 878.3V880.8M1355.5 878.3V880.8M1361.2 878.3V880.8M1366.8 878.3V882.8M1372.5 878.3V880.8M1378.1 878.3V880.8M1383.7 878.3V880.8M1389.4 878.3V880.8M1395.0 878.3V882.8M1400.7 878.3V880.8M1406.3 878.3V880.8M1412.0 878.3V880.8M1417.6 878.3V880.8M1423.3 878.3V882.8M1428.9 878.3V880.8M1434.6 878.3V880.8M1440.2 878.3V880.8M1445.9 878.3V880.8M1451.5 878.3V882.8" stroke="#222" stroke-width="1.1"/>
<g font-family="Liberation Sans" font-size="12" fill="#222" text-anchor="middle"><text x="999.8" y="895">0</text><text x="1028.0" y="895">0,25</text><text x="1056.3" y="895">0,5</text><text x="1084.5" y="895">0,75</text><text x="1112.7" y="895">1</text><text x="1141.0" y="895">1,25</text><text x="1169.2" y="895">1,5</text><text x="1197.4" y="895">1,75</text><text x="1225.7" y="895">2</text><text x="1253.9" y="895">2,25</text><text x="1282.1" y="895">2,5</text><text x="1310.3" y="895">2,75</text><text x="1338.6" y="895">3</text><text x="1366.8" y="895">3,25</text><text x="1395.0" y="895">3,5</text><text x="1423.3" y="895">3,75</text><text x="1451.5" y="895">4</text></g>
<path d="M1036.5 858.5h9v11l-2.5 4h-4l-2.5 -4z" fill="#dcdcdc" stroke="#7a7a7a"/>
<rect x="1039" y="873" width="4" height="2.5" fill="#222"/>
<rect x="1145" y="859" width="4.5" height="16" fill="#40e040" stroke="#1a5a1a" stroke-width="1"/>
</svg>
<!-- left chart header -->
<div class="lbl b" style="left:475px;top:343px">Transient</div>
<div class="lbl b" style="left:552px;top:343px">Statisch</div>
<div class="lbl b" style="left:378px;top:364px;font-size:12.6px">Grenzwert:</div>
<div class="lbl b" style="left:378px;top:389px;font-size:12.6px">Messwert:</div>
<div class="box r" style="left:464px;top:359px;width:73px;height:23px">280 N</div>
<div class="box r" style="left:539px;top:359px;width:73px;height:23px">140 N</div>
<div class="box r" style="left:464px;top:384px;width:73px;height:23px">145 N</div>
<div class="box r" style="left:539px;top:384px;width:73px;height:23px">145 N</div>
<div class="lbl" style="left:643px;top:362px">Druck</div>
<div class="lbl" style="left:645px;top:389px">Kraft</div>
<div class="box r" style="left:687px;top:357px;width:96px;height:23px">17 N/cm²</div>
<div class="box r" style="left:688px;top:384px;width:96px;height:23px">123 N</div>

<!-- right header -->
<div class="lbl b" style="left:1093px;top:342px">Transient</div>
<div class="lbl b" style="left:1171px;top:342px">Statisch</div>
<div class="lbl b" style="left:998px;top:367px;font-size:12.6px">Grenzwert:</div>
<div class="lbl b" style="left:998px;top:393px;font-size:12.6px">Messwert:</div>
<div class="box r" style="left:1083px;top:362px;width:73px;height:23px">380 N/cm²</div>
<div class="box r" style="left:1158px;top:362px;width:73px;height:23px">190 N/cm²</div>
<div class="box r" style="left:1083px;top:387px;width:73px;height:23px">22 N/cm²</div>
<div class="box r" style="left:1158px;top:387px;width:73px;height:23px">23 N/cm²</div>
<div class="box dd" style="left:995px;top:412px;width:86px;height:23px">3D</div>
<div class="box dd" style="left:1083px;top:412px;width:148px;height:23px">Keine Grenzwerte</div>

<svg width="1511" height="919" style="left:0;top:0">
<line x1="1113.9" y1="695.8" x2="1113.9" y2="528.1" stroke="#7a7a7a" stroke-width="1.2"/>
<line x1="1161.2" y1="678.9" x2="1161.2" y2="511.1" stroke="#7a7a7a" stroke-width="1.2"/>
<line x1="1208.4" y1="662.0" x2="1208.4" y2="494.0" stroke="#7a7a7a" stroke-width="1.2"/>
<line x1="1066.6" y1="679.3" x2="1255.7" y2="611.4" stroke="#7a7a7a" stroke-width="1.2"/>
<line x1="1066.6" y1="645.7" x2="1255.7" y2="577.8" stroke="#7a7a7a" stroke-width="1.2"/>
<line x1="1066.6" y1="612.2" x2="1255.7" y2="544.2" stroke="#7a7a7a" stroke-width="1.2"/>
<line x1="1066.6" y1="578.6" x2="1255.7" y2="510.6" stroke="#7a7a7a" stroke-width="1.2"/>
<line x1="1290.1" y1="668.5" x2="1290.1" y2="500.2" stroke="#7a7a7a" stroke-width="1.2"/>
<line x1="1324.5" y1="692.0" x2="1324.5" y2="523.5" stroke="#7a7a7a" stroke-width="1.2"/>
<line x1="1358.8" y1="715.5" x2="1358.8" y2="546.7" stroke="#7a7a7a" stroke-width="1.2"/>
<line x1="1255.7" y1="611.4" x2="1393.2" y2="705.2" stroke="#7a7a7a" stroke-width="1.2"/>
<line x1="1255.7" y1="577.8" x2="1393.2" y2="671.4" stroke="#7a7a7a" stroke-width="1.2"/>
<line x1="1255.7" y1="544.2" x2="1393.2" y2="637.5" stroke="#7a7a7a" stroke-width="1.2"/>
<line x1="1255.7" y1="510.6" x2="1393.2" y2="603.7" stroke="#7a7a7a" stroke-width="1.2"/>
<line x1="1290.1" y1="668.5" x2="1101.0" y2="736.3" stroke="#7a7a7a" stroke-width="1.2"/>
<line x1="1208.4" y1="662.0" x2="1345.9" y2="756.0" stroke="#7a7a7a" stroke-width="1.2"/>
<line x1="1324.5" y1="692.0" x2="1135.3" y2="759.8" stroke="#7a7a7a" stroke-width="1.2"/>
<line x1="1161.2" y1="678.9" x2="1298.7" y2="772.9" stroke="#7a7a7a" stroke-width="1.2"/>
<line x1="1358.8" y1="715.5" x2="1169.7" y2="783.3" stroke="#7a7a7a" stroke-width="1.2"/>
<line x1="1113.9" y1="695.8" x2="1251.4" y2="789.8" stroke="#7a7a7a" stroke-width="1.2"/>
<line x1="1066.6" y1="545.1" x2="1255.7" y2="477.0" stroke="#1a1a1a" stroke-width="1.6"/>
<line x1="1255.7" y1="477.0" x2="1393.2" y2="569.9" stroke="#1a1a1a" stroke-width="1.6"/>
<line x1="1255.7" y1="477.0" x2="1255.7" y2="645.0" stroke="#1a1a1a" stroke-width="1.6"/>
<line x1="1066.6" y1="545.1" x2="1066.6" y2="712.8" stroke="#1a1a1a" stroke-width="1.6"/>
<line x1="1393.2" y1="569.9" x2="1393.2" y2="739.0" stroke="#1a1a1a" stroke-width="1.6"/>
<line x1="1066.6" y1="712.8" x2="1255.7" y2="645.0" stroke="#1a1a1a" stroke-width="1.6"/>
<line x1="1255.7" y1="645.0" x2="1393.2" y2="739.0" stroke="#1a1a1a" stroke-width="1.6"/>
<line x1="1066.6" y1="712.8" x2="1204.1" y2="806.8" stroke="#1a1a1a" stroke-width="1.6"/>
<line x1="1204.1" y1="806.8" x2="1393.2" y2="739.0" stroke="#1a1a1a" stroke-width="1.6"/>
<path d="M1066.6 701.6l5 -1M1249.7 634.8l6 -1M1393.2 727.7l-5 -2M1066.6 690.4l5 -1M1249.7 623.6l6 -1M1393.2 716.5l-5 -2M1066.6 679.3l5 -1M1249.7 612.4l6 -1M1393.2 705.2l-5 -2M1066.6 668.1l5 -1M1249.7 601.2l6 -1M1393.2 693.9l-5 -2M1066.6 656.9l5 -1M1249.7 590.0l6 -1M1393.2 682.6l-5 -2M1066.6 645.7l5 -1M1249.7 578.8l6 -1M1393.2 671.4l-5 -2M1066.6 634.5l5 -1M1249.7 567.6l6 -1M1393.2 660.1l-5 -2M1066.6 623.4l5 -1M1249.7 556.4l6 -1M1393.2 648.8l-5 -2M1066.6 612.2l5 -1M1249.7 545.2l6 -1M1393.2 637.5l-5 -2M1066.6 601.0l5 -1M1249.7 534.0l6 -1M1393.2 626.3l-5 -2M1066.6 589.8l5 -1M1249.7 522.8l6 -1M1393.2 615.0l-5 -2M1066.6 578.6l5 -1M1249.7 511.6l6 -1M1393.2 603.7l-5 -2M1066.6 567.5l5 -1M1249.7 500.4l6 -1M1393.2 592.4l-5 -2M1066.6 556.3l5 -1M1249.7 489.2l6 -1M1393.2 581.2l-5 -2M1090.2 536.6l0 5M1272.9 488.6l0 5M1083.8 724.5l4 -3M1227.7 798.3l-1 -5M1113.9 528.1l0 5M1290.1 500.2l0 5M1101.0 736.3l4 -3M1251.4 789.8l-1 -5M1137.5 519.6l0 5M1307.3 511.8l0 5M1118.2 748.0l4 -3M1275.0 781.4l-1 -5M1161.2 511.1l0 5M1324.5 523.5l0 5M1135.3 759.8l4 -3M1298.7 772.9l-1 -5M1184.8 502.5l0 5M1341.6 535.1l0 5M1152.5 771.5l4 -3M1322.3 764.4l-1 -5M1208.4 494.0l0 5M1358.8 546.7l0 5M1169.7 783.3l4 -3M1345.9 756.0l-1 -5M1232.1 485.5l0 5M1376.0 558.3l0 5M1186.9 795.0l4 -3M1369.6 747.5l-1 -5" stroke="#555" stroke-width="1" fill="none"/>
<svg width="1511" height="919" style="left:0;top:0"><defs><linearGradient id="gBig" gradientUnits="userSpaceOnUse" x1="0" y1="567" x2="0" y2="695"><stop offset="0" stop-color="#e89000"/><stop offset="0.04" stop-color="#f0e000"/><stop offset="0.1" stop-color="#a0f000"/><stop offset="0.18" stop-color="#30f020"/><stop offset="0.3" stop-color="#00f060"/><stop offset="0.4" stop-color="#00e0d0"/><stop offset="0.46" stop-color="#00b0ff"/><stop offset="0.53" stop-color="#0050ff"/><stop offset="0.64" stop-color="#1a10f0"/><stop offset="0.72" stop-color="#5010e0"/><stop offset="0.8" stop-color="#d020e0"/><stop offset="1" stop-color="#f868f8"/></linearGradient><linearGradient id="gMass" gradientUnits="userSpaceOnUse" x1="0" y1="650" x2="0" y2="770"><stop offset="0" stop-color="#d030e0"/><stop offset="0.3" stop-color="#f050f0"/><stop offset="0.7" stop-color="#fa70fa"/><stop offset="1" stop-color="#ff90ff"/></linearGradient><linearGradient id="gC" gradientUnits="userSpaceOnUse" x1="0" y1="625" x2="0" y2="690"><stop offset="0" stop-color="#2040f0"/><stop offset="0.35" stop-color="#2818e8"/><stop offset="0.6" stop-color="#9020e0"/><stop offset="1" stop-color="#f060f0"/></linearGradient><linearGradient id="gD" gradientUnits="userSpaceOnUse" x1="0" y1="654" x2="0" y2="712"><stop offset="0" stop-color="#2050f0"/><stop offset="0.3" stop-color="#1818f0"/><stop offset="0.6" stop-color="#a020e0"/><stop offset="1" stop-color="#f060f0"/></linearGradient><linearGradient id="gF" gradientUnits="userSpaceOnUse" x1="0" y1="657" x2="0" y2="705"><stop offset="0" stop-color="#3020e0"/><stop offset="0.4" stop-color="#7020e0"/><stop offset="1" stop-color="#f060f0"/></linearGradient><linearGradient id="gE" gradientUnits="userSpaceOnUse" x1="0" y1="660" x2="0" y2="708"><stop offset="0" stop-color="#2060f0"/><stop offset="0.3" stop-color="#1818f0"/><stop offset="0.7" stop-color="#b020e0"/><stop offset="1" stop-color="#f060f0"/></linearGradient><linearGradient id="gP2" gradientUnits="userSpaceOnUse" x1="0" y1="640" x2="0" y2="690"><stop offset="0" stop-color="#2050f0"/><stop offset="0.4" stop-color="#2010e8"/><stop offset="0.75" stop-color="#c020e0"/><stop offset="1" stop-color="#f060f0"/></linearGradient><linearGradient id="gP3" gradientUnits="userSpaceOnUse" x1="0" y1="662" x2="0" y2="700"><stop offset="0" stop-color="#2070f0"/><stop offset="0.4" stop-color="#1818f0"/><stop offset="1" stop-color="#5010e0"/></linearGradient><linearGradient id="gRidge" gradientUnits="userSpaceOnUse" x1="0" y1="662" x2="0" y2="728"><stop offset="0" stop-color="#2a80f0"/><stop offset="0.25" stop-color="#1e30f0"/><stop offset="0.45" stop-color="#1a1af0"/><stop offset="0.62" stop-color="#4a14e0"/><stop offset="0.8" stop-color="#c020e0"/><stop offset="1" stop-color="#f050f0"/></linearGradient><linearGradient id="gFront" gradientUnits="userSpaceOnUse" x1="0" y1="712" x2="0" y2="775"><stop offset="0" stop-color="#f060f0" stop-opacity="0"/><stop offset="0.25" stop-color="#f064f0" stop-opacity="1"/><stop offset="0.5" stop-color="#f868f8"/><stop offset="1" stop-color="#ff90ff"/></linearGradient><filter id="sblur" x="-5%" y="-5%" width="110%" height="110%"><feGaussianBlur stdDeviation="0.7"/></filter></defs><g filter="url(#sblur)">
<polygon points="1186.0,690.0 1194.0,649.6 1201.8,625.2 1211.4,658.3 1221.9,672.2 1235.0,690.0 1242.7,672.6 1249.7,654.0 1256.5,690.0 1262.0,705.0 1268.9,717.5 1266.0,735.0 1261.9,741.9 1221.9,752.3 1181.8,775.0 1152.2,773.2 1145.3,724.5" fill="url(#gMass)" />
<polygon points="1188.0,685.0 1194.0,649.6 1201.8,625.2 1206.0,640.0 1211.4,658.3 1216.0,690.0" fill="url(#gC)" />
<polygon points="1230.0,712.0 1242.7,672.6 1249.7,654.0 1256.5,690.0 1262.0,705.0 1258.0,715.0" fill="url(#gD)" />
<polygon points="1140.0,700.0 1144.7,671.5 1149.9,650.6 1154.2,622.7 1162.1,605.3 1168.0,585.0 1174.3,567.8 1176.0,575.0 1179.5,594.8 1186.5,633.1 1192.7,652.0 1197.0,700.0" fill="url(#gBig)" />
<polygon points="1195.0,705.0 1206.2,657.4 1214.0,664.0 1221.9,672.2 1232.0,705.0" fill="url(#gF)" />
<polygon points="1163.0,708.0 1172.0,675.0 1178.3,661.8 1185.0,668.0 1190.0,680.0 1197.0,708.0" fill="url(#gE)" />
<polygon points="1120.0,692.0 1129.6,640.0 1137.0,672.0 1147.0,692.0" fill="url(#gP2)" />
<polygon points="1103.0,697.0 1109.9,682.6 1114.0,676.0 1118.3,662.3 1122.0,672.0 1125.5,675.5 1129.0,680.0 1135.0,683.0 1140.0,688.0 1145.8,690.0 1150.0,693.0 1157.8,688.0 1165.0,692.0 1171.0,694.0 1176.0,700.0 1179.0,712.0 1160.0,722.0 1144.6,725.7 1141.0,722.1 1136.2,729.3 1130.2,720.9 1125.5,725.7 1115.9,709.0 1108.7,718.5 1103.9,711.3 1098.0,718.0" fill="url(#gRidge)" />
<polygon points="1084.8,720.9 1088.0,708.0 1092.0,697.0 1096.7,692.2 1100.0,697.0 1103.9,690.0 1107.0,693.0 1109.9,686.0 1106.0,705.0 1103.9,711.3 1098.0,718.0 1095.5,724.5 1090.0,724.0" fill="#f070f0" />
<circle cx="1125.5" cy="681" r="3.5" fill="#3a7cf0" opacity="0.7"/><circle cx="1146" cy="698" r="3" fill="#3a7cf0" opacity="0.6"/><circle cx="1158" cy="694" r="3" fill="#3a7cf0" opacity="0.6"/>
<circle cx="1087" cy="713" r="2.3" fill="#333"/>
<polygon points="1145.3,724.5 1160.0,719.0 1178.0,716.0 1200.0,712.0 1225.0,715.0 1250.0,720.0 1264.0,726.0 1261.9,741.9 1221.9,752.3 1181.8,775.0 1152.2,773.2" fill="url(#gFront)" />
<polygon points="1268.0,691.0 1279.0,684.0 1291.0,691.0 1280.0,699.0" fill="#f070f0" />
<polygon points="1308.0,710.0 1319.0,703.0 1332.0,710.0 1321.0,718.0" fill="#f070f0" /></g></svg>
<svg width="1511" height="919" style="left:0;top:0"><g font-family="Liberation Sans" font-size="11.5" font-style="italic" fill="#3a3a3a">
<text transform="translate(1046,556) rotate(-12)" text-anchor="middle">30</text>
<text transform="translate(1046,592) rotate(-12)" text-anchor="middle">24</text>
<text transform="translate(1046,625) rotate(-12)" text-anchor="middle">18</text>
<text transform="translate(1046,658) rotate(-12)" text-anchor="middle">12</text>
<text transform="translate(1050,692) rotate(-12)" text-anchor="middle">6</text>
<text transform="translate(1050,724) rotate(-12)" text-anchor="middle">0</text>
<text transform="translate(1409,587) rotate(12)" text-anchor="middle">30</text>
<text transform="translate(1409,621) rotate(12)" text-anchor="middle">24</text>
<text transform="translate(1409,653) rotate(12)" text-anchor="middle">18</text>
<text transform="translate(1409,686) rotate(12)" text-anchor="middle">12</text>
<text transform="translate(1407,720) rotate(12)" text-anchor="middle">6</text>
<text transform="translate(1407,752) rotate(12)" text-anchor="middle">0</text>
<text transform="translate(1023,648) rotate(-90)" text-anchor="middle" font-size="12"><tspan font-style="normal">Druck [N/cm²]</tspan></text>
<text transform="translate(1432,679) rotate(-90)" text-anchor="middle" font-size="12">Druck [N/cm²]</text>
<text transform="translate(1081,748) rotate(-35)" text-anchor="middle">14</text>
<text transform="translate(1114,772) rotate(-35)" text-anchor="middle">28</text>
<text transform="translate(1151,796) rotate(-35)" text-anchor="middle">42</text>
<text transform="translate(1183,820) rotate(-35)" text-anchor="middle">56</text>
<text transform="translate(1220,821) rotate(55)" text-anchor="middle">56</text>
<text transform="translate(1268,806) rotate(55)" text-anchor="middle">42</text>
<text transform="translate(1313,789) rotate(55)" text-anchor="middle">28</text>
<text transform="translate(1361,771) rotate(55)" text-anchor="middle">14</text>
<text transform="translate(1090,778) rotate(50)" text-anchor="middle" font-size="12">Y [mm]</text>
<text transform="translate(1334,800) rotate(-30)" text-anchor="middle" font-size="12">X [mm]</text>
</g></svg>
</body></html>
